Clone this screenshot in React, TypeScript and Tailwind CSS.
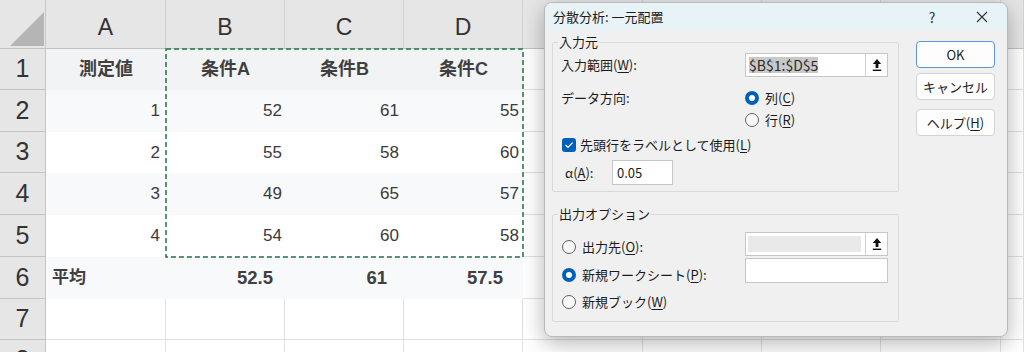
const colLetters = ["A", "B", "C", "D", "E", "F", "G", "H", ""];
const colWidths = ["w-[120px]", "w-[119px]", "w-[119px]", "w-[119px]", "w-[120px]", "w-[119px]", "w-[119px]", "w-[120px]", "flex-1"];
const rowHeights = ["h-[41px]", "h-[42px]", "h-[41px]", "h-[42px]", "h-[42px]", "h-[42px]", "h-[41px]", "h-[40px]"];

// table area A1:D6, per-column right padding for the numbers
const numPad = ["pr-[6px]", "pr-[3px]", "pr-[5px]", "pr-[4px]"];
const totalPad = ["", "pr-[12px]", "pr-[17px]", "pr-[20px]"];

const rows = [
  { bg: "bg-[#f2f3f5]", cells: ["測定値", "条件A", "条件B", "条件C"], kind: "head" },
  { bg: "bg-[#f8f9fb]", cells: ["1", "52", "61", "55"], kind: "num" },
  { bg: "bg-white", cells: ["2", "55", "58", "60"], kind: "num" },
  { bg: "bg-[#f8f9fb]", cells: ["3", "49", "65", "57"], kind: "num" },
  { bg: "bg-white", cells: ["4", "54", "60", "58"], kind: "num" },
  { bg: "bg-[#f8f9fb]", cells: ["平均", "52.5", "61", "57.5"], kind: "total" },
];

const cellFont = "font-['Liberation_Sans','Noto_Sans_CJK_JP',sans-serif]";

function Sheet() {
  return (
    <div className={`flex flex-col ${cellFont}`}>
      {/* column headers */}
      <div className="flex h-[49px] bg-[#e6e6e6] border-b border-[#c2c2c2]">
        <div className="relative w-[46px] border-r border-[#c8c8c8]">
          <svg className="absolute left-0 top-0" width="46" height="48" viewBox="0 0 46 48">
            <path d="M10 46 L44 46 L44 12 Z" fill="#b5b5b5" />
          </svg>
        </div>
        {colLetters.map((c, i) => (
          <div
            key={i}
            className={`${colWidths[i]} border-r border-[#d2d2d2] flex items-center justify-center pt-[6px] text-[23px] text-[#333]`}
          >
            {c}
          </div>
        ))}
      </div>

      {rowHeights.map((h, r) => {
        const row = rows[r];
        return (
          <div key={r} className={`flex ${h}`}>
            <div className="w-[46px] shrink-0 bg-[#e6e6e6] border-r border-b border-[#c4c4c4] flex items-center justify-center text-[25px] text-[#333]">
              {r + 1}
            </div>
            {row ? (
              <div className={`flex ${row.bg}`}>
                {row.cells.map((t, c) => {
                  let cls = "";
                  if (row.kind === "head") cls = "justify-center font-bold text-[18px] text-[#404040]";
                  else if (row.kind === "num") cls = `justify-end text-[17px] text-[#3a3a3a] ${numPad[c]}`;
                  else cls = c === 0
                    ? "justify-start pl-[6px] font-bold text-[17px] text-[#404040]"
                    : `justify-end font-bold text-[18.5px] text-[#404040] ${totalPad[c]}`;
                  return (
                    <div key={c} className={`${colWidths[c]} flex items-center ${cls}`}>
                      {t}
                    </div>
                  );
                })}
              </div>
            ) : (
              colWidths.slice(0, 4).map((w, c) => (
                <div key={c} className={`${w} border-r border-b border-[#e1e1e1]`} />
              ))
            )}
            {colWidths.slice(4).map((w, c) => (
              <div key={c} className={`${w} border-r border-b border-[#e1e1e1]`} />
            ))}
          </div>
        );
      })}
    </div>
  );
}

function Marquee() {
  return (
    <svg className="absolute left-[164px] top-[47px]" width="361" height="212" viewBox="0 0 361 212">
      <rect x="2" y="2" width="357" height="208" fill="none" stroke="#217346" strokeWidth="1.5" strokeDasharray="5 3" />
    </svg>
  );
}

function UpArrow() {
  return (
    <svg width="10" height="14" viewBox="0 0 10 14">
      <path d="M5 1 L9.2 6 H6.4 V10 H3.6 V6 H0.8 Z" fill="#111" />
      <rect x="0.8" y="11.6" width="8.4" height="1.4" fill="#111" />
    </svg>
  );
}

function Radio({ on }: { on?: boolean }) {
  return on ? (
    <span className="w-[14px] h-[14px] shrink-0 rounded-full bg-[#005fb8] flex items-center justify-center">
      <span className="w-[6px] h-[6px] rounded-full bg-white" />
    </span>
  ) : (
    <span className="w-[14px] h-[14px] shrink-0 rounded-full border border-[#616161] bg-[#f7f7f7]" />
  );
}

function Checkbox() {
  return (
    <span className="w-[14px] h-[14px] shrink-0 rounded-[3px] bg-[#005fb8] flex items-center justify-center">
      <svg width="10" height="8" viewBox="0 0 10 8">
        <path d="M1.5 4 L4 6.4 L8.6 1.6" fill="none" stroke="white" strokeWidth="1.3" />
      </svg>
    </span>
  );
}

function Btn({ children, focus, className = "" }: { children: React.ReactNode; focus?: boolean; className?: string }) {
  return (
    <div
      className={`h-[27px] rounded-[4px] bg-[#fdfdfd] flex items-center justify-center border ${
        focus ? "border-[#5a96d6]" : "border-[#d3d3d3]"
      } ${className}`}
    >
      {children}
    </div>
  );
}

function Dialog() {
  return (
    <div className="absolute left-[544px] top-[2px] w-[464px] h-[335px] rounded-[8px] border border-[#b9b9b9] bg-[#f0f0f0] shadow-[0_6px_22px_rgba(0,0,0,0.3)] overflow-hidden font-['Noto_Sans_CJK_JP',sans-serif] text-[13px] leading-[18px] text-[#1b1b1b]">
      {/* title bar */}
      <div className="h-[27px] bg-[#e7f3f6] flex items-center pl-[8px]">
        <span>分散分析: 一元配置</span>
        <span className="ml-auto w-[46px] text-center text-[14px] text-[#333]">?</span>
        <span className="ml-[4px] mr-[2px] w-[46px] flex justify-center">
          <svg width="12" height="12" viewBox="0 0 12 12">
            <path d="M1 1 L11 11 M11 1 L1 11" stroke="#333" strokeWidth="1.1" />
          </svg>
        </span>
      </div>

      <div className="flex">
        <div className="ml-[7px] w-[347px]">
          {/* 入力元 */}
          <fieldset className="mt-[3px] border border-[#d9d9d9] rounded-[2px] px-[8px] pb-[6px]">
            <legend className="-ml-[3px] px-[1px]">入力元</legend>
            <div className="mt-[2px] flex items-center h-[24px]">
              <span className="w-[184px]">
                入力範囲(<u className="underline-offset-2">W</u>):
              </span>
              <div className="w-[143px] h-[24px] border border-[#c6c6c6] bg-white flex items-center">
                <span className="ml-[3px] bg-[#c9c9c9] text-[14px] leading-[16px] text-[#2a2a2a]">$B$1:$D$5</span>
                <span className="ml-auto h-[22px] w-[22px] border-l border-[#d0d0d0] flex items-center justify-center">
                  <UpArrow />
                </span>
              </div>
            </div>
            <div className="mt-[11px] flex items-center h-[20px]">
              <span className="w-[184px]">データ方向:</span>
              <Radio on />
              <span className="ml-[6px]">
                列(<u className="underline-offset-2">C</u>)
              </span>
            </div>
            <div className="mt-[2px] flex items-center h-[20px]">
              <span className="w-[184px]" />
              <Radio />
              <span className="ml-[6px]">
                行(<u className="underline-offset-2">R</u>)
              </span>
            </div>
            <div className="mt-[5px] flex items-center h-[20px] pl-[1px]">
              <Checkbox />
              <span className="ml-[4px]">
                先頭行をラベルとして使用(<u className="underline-offset-2">L</u>)
              </span>
            </div>
            <div className="mt-[5px] flex items-center h-[25px]">
              <span className="w-[51px] pl-[4px]">
                α(<u className="underline-offset-2">A</u>):
              </span>
              <div className="w-[61px] h-[25px] border border-[#c6c6c6] bg-white flex items-center pl-[4px]">0.05</div>
            </div>
          </fieldset>

          {/* 出力オプション */}
          <fieldset className="mt-[13px] border border-[#d9d9d9] rounded-[2px] px-[8px] pb-[6px]">
            <legend className="-ml-[3px] px-[1px]">出力オプション</legend>
            <div className="mt-[9px] flex">
              <div className="w-[184px] flex flex-col">
                <div className="h-[28px] flex items-center pl-[1px] pt-[2px]">
                  <Radio />
                  <span className="ml-[6px]">
                    出力先(<u className="underline-offset-2">O</u>):
                  </span>
                </div>
                <div className="h-[28px] flex items-center pl-[1px] pt-[2px]">
                  <Radio on />
                  <span className="ml-[6px]">
                    新規ワークシート(<u className="underline-offset-2">P</u>):
                  </span>
                </div>
                <div className="h-[27px] flex items-center pl-[1px]">
                  <Radio />
                  <span className="ml-[6px]">
                    新規ブック(<u className="underline-offset-2">W</u>)
                  </span>
                </div>
              </div>
              <div className="flex flex-col">
                <div className="w-[143px] h-[24px] border border-[#c6c6c6] bg-white flex items-center">
                  <span className="ml-[2px] w-[113px] h-[16px] bg-[#e9e9e9]" />
                  <span className="ml-auto h-[22px] w-[22px] border-l border-[#d0d0d0] flex items-center justify-center">
                    <UpArrow />
                  </span>
                </div>
                <div className="mt-[2px] w-[143px] h-[25px] border border-[#c6c6c6] bg-white" />
              </div>
            </div>
          </fieldset>
        </div>

        <div className="ml-[17px] pt-[11px] w-[79px] flex flex-col">
          <Btn focus>OK</Btn>
          <Btn className="mt-[5px]">キャンセル</Btn>
          <Btn className="mt-[9px]">
            ヘルプ(<u className="underline-offset-2">H</u>)
          </Btn>
        </div>
      </div>
    </div>
  );
}

export default function App() {
  return (
    <div className="relative w-[1024px] h-[352px] overflow-hidden bg-white">
      <Sheet />
      <Marquee />
      <Dialog />
    </div>
  );
}
